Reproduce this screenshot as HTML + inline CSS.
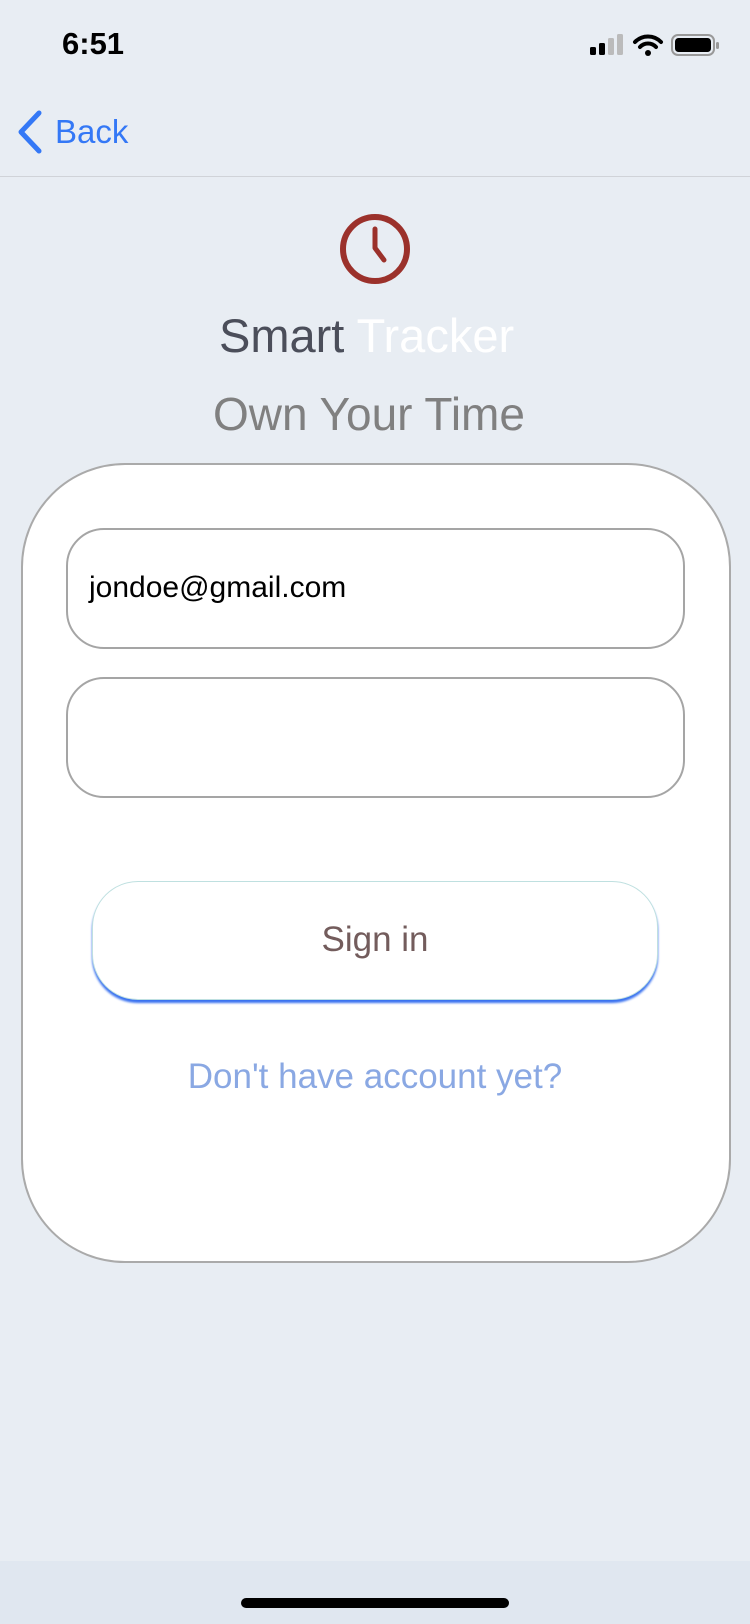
<!DOCTYPE html>
<html><head><meta charset="utf-8"><style>
body{margin:0;width:750px;height:1624px;background:#e8edf3;font-family:"Liberation Sans",sans-serif;position:relative;overflow:hidden}
.a{position:absolute}
</style></head><body>
<div class="a" style="left:62px;top:26px;font-size:31px;font-weight:bold;color:#000">6:51</div>
<svg class="a" style="left:588px;top:33px" width="132" height="26">
<rect x="2" y="14" width="6" height="8" rx="1.5" fill="#000"/>
<rect x="11" y="10" width="6" height="12" rx="1.5" fill="#000"/>
<rect x="20" y="5" width="6" height="17" rx="1.5" fill="#bbb"/>
<rect x="29" y="1" width="6" height="21" rx="1.5" fill="#bbb"/>
<path d="M47 9 A18 18 0 0 1 73 9" stroke="#000" stroke-width="4" fill="none" stroke-linecap="round"/>
<path d="M52 14 A11 11 0 0 1 68 14" stroke="#000" stroke-width="4" fill="none" stroke-linecap="round"/>
<circle cx="60" cy="20" r="3" fill="#000"/>
<rect x="84" y="2" width="42" height="20" rx="6" fill="none" stroke="#999" stroke-width="2"/>
<rect x="87" y="5" width="36" height="14" rx="3.5" fill="#000"/>
<rect x="128" y="9" width="3" height="7" rx="1.5" fill="#999"/>
</svg>
<svg class="a" style="left:14px;top:110px" width="30" height="44"><path d="M25 3 L7 22 L25 41" stroke="#3478f6" stroke-width="5" fill="none" stroke-linecap="round" stroke-linejoin="round"/></svg>
<div class="a" style="left:55px;top:113px;font-size:33px;color:#3478f6">Back</div>
<div class="a" style="left:0;top:176px;width:750px;height:1px;background:#d0d3d8"></div>
<svg class="a" style="left:338px;top:212px" width="74" height="74"><circle cx="37" cy="37" r="32" stroke="#9b312b" stroke-width="6" fill="none"/><path d="M37 17 V36 L46 48" stroke="#9b312b" stroke-width="5" fill="none" stroke-linecap="round" stroke-linejoin="round"/></svg>
<div class="a" style="left:219px;top:308px;font-size:47px;color:#4b4e5a;white-space:nowrap">Smart <span style="color:#fff">Tracker</span></div>
<div class="a" style="left:213px;top:387px;font-size:46px;color:#808080;white-space:nowrap">Own Your Time</div>
<div class="a" style="left:21px;top:463px;width:706px;height:796px;border:2px solid #aaa;border-radius:104px;background:#fff"></div>
<div class="a" style="left:66px;top:528px;width:615px;height:117px;border:2px solid #a5a5a5;border-radius:38px;background:#fff"></div>
<div class="a" style="left:89px;top:571px;font-size:30px;color:#000">jondoe@gmail.com</div>
<div class="a" style="left:66px;top:677px;width:615px;height:117px;border:2px solid #a5a5a5;border-radius:38px;background:#fff"></div>
<div class="a" style="left:92px;top:881px;width:564px;height:117px;border:1.5px solid #bfe0e0;border-radius:46px;background:#fff;box-shadow:0 3px 2px #3a72f0"></div>
<div class="a" style="left:0;width:750px;top:920px;text-align:center;font-size:35px;color:#735c5c">Sign in</div>
<div class="a" style="left:0;width:750px;top:1057px;text-align:center;font-size:35px;color:#8aa8e3">Don't have account yet?</div>
<div class="a" style="left:0;top:1561px;width:750px;height:63px;background:#e0e7f0"></div>
<div class="a" style="left:241px;top:1598px;width:268px;height:10px;border-radius:5px;background:#000"></div>
</body></html>
